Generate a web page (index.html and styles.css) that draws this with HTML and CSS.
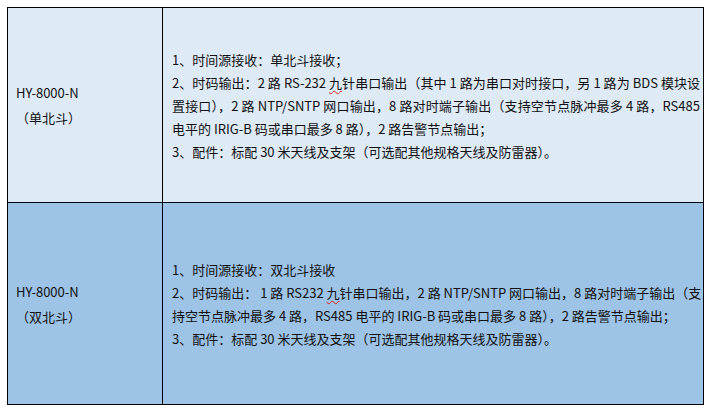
FILE: index.html
```html
<!DOCTYPE html>
<html lang="zh-CN">
<head>
<meta charset="utf-8">
<title>HY-8000-N</title>
<link rel="stylesheet" href="styles.css">
</head>
<body>
<table class="spec">
  <tr class="row row-single">
    <td class="model">
      <p>HY-8000-N</p>
      <p>（单北斗）</p>
    </td>
    <td class="desc">
      <p>1、时间源接收：单北斗接收；</p>
      <p><span class="ln">2、时码输出：2 路 RS-232 <span class="spell">九</span>针串口输出（其中 1 路为串口对时接口，另 1 路为 BDS 模块设</span><span class="ln">置接口），2 路 NTP/SNTP 网口输出，8 路对时端子输出（支持空节点脉冲最多 4 路，RS485</span><span class="last">电平的 IRIG-B 码或串口最多 8 路），2 路告警节点输出；</span></p>
      <p>3、配件：标配 30 米天线及支架（可选配其他规格天线及防雷器）。</p>
    </td>
  </tr>
  <tr class="row row-dual">
    <td class="model">
      <p>HY-8000-N</p>
      <p>（双北斗）</p>
    </td>
    <td class="desc">
      <p>1、时间源接收：双北斗接收</p>
      <p><span class="ln">2、时码输出： 1 路 RS232 <span class="spell">九</span>针串口输出，2 路 NTP/SNTP 网口输出，8 路对时端子输出（支</span><span class="last">持空节点脉冲最多 4 路，RS485 电平的 IRIG-B 码或串口最多 8 路），2 路告警节点输出；</span></p>
      <p>3、配件：标配 30 米天线及支架（可选配其他规格天线及防雷器）。</p>
    </td>
  </tr>
</table>
</body>
</html>
```
FILE: styles.css
```css
html, body {
  margin: 0;
  padding: 0;
  background: #ffffff;
}
body {
  padding: 7px 0 0 7px;
  font-family: "Noto Sans CJK SC", "Noto Sans", sans-serif;
  font-size: 13px;
  color: #111111;
}
.spec {
  border-collapse: collapse;
  width: 697px;
  table-layout: fixed;
}
.spec td {
  border: 1px solid #000000;
  vertical-align: middle;
  padding: 0;
}
.row-single td {
  height: 194px;
  background: #deeaf6;
}
.row-dual td {
  height: 201px;
  background: #9dc3e6;
}
.model {
  width: 146px;
  padding-left: 8px !important;
}
.model p {
  margin: 0;
  line-height: 25px;
  white-space: nowrap;
}
.desc {
  padding-left: 9px !important;
  padding-right: 3px !important;
}
.desc p {
  margin: 0;
  line-height: 23px;
  white-space: nowrap;
}
.desc .ln {
  display: block;
  text-align: justify;
  text-align-last: justify;
}
.desc .last {
  display: block;
}
.spell {
  text-decoration: underline wavy #e02020;
  text-decoration-thickness: 1px;
  text-underline-offset: 2px;
}
```
